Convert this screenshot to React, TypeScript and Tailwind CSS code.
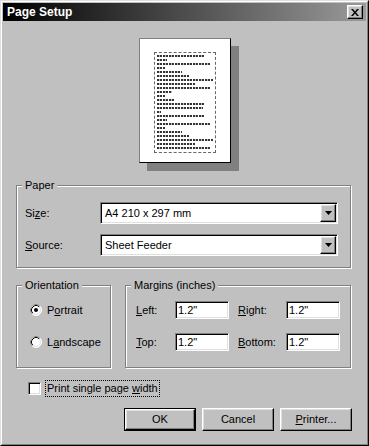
const raised =
  'border border-t-white border-l-white border-r-black border-b-black shadow-[inset_-1px_-1px_0_#808080,inset_1px_1px_0_#dfdfdf] bg-[#c0c0c0]'
const sunken =
  'border border-t-[#808080] border-l-[#808080] border-r-white border-b-white shadow-[inset_1px_1px_0_#000,inset_-1px_-1px_0_#dfdfdf] bg-white'
const etched =
  'border border-[#808080] shadow-[inset_1px_1px_0_#fff,1px_1px_0_#fff]'

const lineWidths = [48, 10, 54, 8, 25, 32, 56, 38, 54, 15, 8, 18, 48, 46, 4, 48, 10, 54, 8, 25, 32, 56, 38, 54]

function Legend({ children }: { children: React.ReactNode }) {
  return (
    <div className="-mt-[7px] ml-[5px] h-[13px] w-fit bg-[#c0c0c0] px-[3px] leading-[13px]">{children}</div>
  )
}

function Select({ value }: { value: string }) {
  return (
    <div className={`${sunken} flex h-[22px] w-[238px] items-center justify-between p-[1px]`}>
      <span className="pl-[3px] leading-none">{value}</span>
      <div className={`${raised} flex h-[18px] w-[16px] items-center justify-center`}>
        <svg width="7" height="4" viewBox="0 0 7 4">
          <path d="M0 0h7L3.5 4z" fill="#000" />
        </svg>
      </div>
    </div>
  )
}

function Radio({ checked }: { checked?: boolean }) {
  return (
    <svg width="12" height="12" viewBox="0 0 12 12" className="shrink-0">
      <circle cx="6" cy="6" r="5.5" fill="#fff" stroke="#fff" />
      <path d="M2.11 9.89A5.5 5.5 0 0 1 9.89 2.11" fill="none" stroke="#808080" />
      <circle cx="6" cy="6" r="4.5" fill="#fff" stroke="#dfdfdf" />
      <path d="M2.82 9.18A4.5 4.5 0 0 1 9.18 2.82" fill="none" stroke="#000" />
      {checked && <circle cx="6" cy="6" r="2" fill="#000" />}
    </svg>
  )
}

function Field({ value }: { value: string }) {
  return (
    <div className={`${sunken} flex h-[18px] w-[54px] items-center pl-[2px] leading-none`}>{value}</div>
  )
}

function Button({ children, primary }: { children: React.ReactNode; primary?: boolean }) {
  if (primary) {
    return (
      <div className="h-[23px] w-[72px] border border-black">
        <div className={`${raised} flex h-full w-full items-center justify-center`}>{children}</div>
      </div>
    )
  }
  return <div className={`${raised} flex h-[23px] w-[72px] items-center justify-center`}>{children}</div>
}

export default function App() {
  return (
    <div className="h-[446px] w-[369px] border border-t-[#dfdfdf] border-l-[#dfdfdf] border-r-black border-b-black bg-[#c0c0c0] font-['Liberation_Sans',Arial,sans-serif] text-[11px] text-black">
      <div className="h-full border border-t-white border-l-white border-r-[#808080] border-b-[#808080] p-[1px]">
        {/* title bar */}
        <div className="flex h-[18px] items-center justify-between bg-[linear-gradient(to_right,#000,#9a9a9a)] pl-[4px] pr-[3px]">
          <span className="text-[12px] font-bold text-white">Page Setup</span>
          <div className={`${raised} flex h-[14px] w-[16px] items-center justify-center`}>
            <svg width="8" height="7" viewBox="0 0 8 7">
              <path d="M0 0h2l2 2.5L6 0h2L5 3.5 8 7H6L4 4.5 2 7H0l3-3.5z" fill="#000" />
            </svg>
          </div>
        </div>

        {/* preview */}
        <div className="mt-[17px] flex justify-center">
          <div className="h-[125px] w-[92px] border border-t-[#808080] border-l-[#808080] border-r-black border-b-black bg-white pl-[14px] pt-[13px] shadow-[8px_8px_0_#808080]">
            <div className="flex h-[101px] w-[62px] flex-col gap-[2px] border border-dashed border-[#666] pl-[2px] pt-[2px]">
              {lineWidths.map((w, i) => (
                <div
                  key={i}
                  className="h-[2px] bg-[repeating-linear-gradient(90deg,#333_0_2px,#bbb_2px_3px,#333_3px_5px,#fff_5px_6px)]"
                  style={{ width: w }}
                />
              ))}
            </div>
          </div>
        </div>

        {/* paper */}
        <div className={`${etched} ml-[13px] mt-[22px] h-[83px] w-[335px]`}>
          <Legend>Paper</Legend>
          <div className="mt-[10px] flex flex-col gap-[10px] pl-[8px]">
            <div className="flex items-center">
              <span className="w-[75px]">
                Si<u className="underline-offset-1">z</u>e:
              </span>
              <Select value="A4 210 x 297 mm" />
            </div>
            <div className="flex items-center">
              <span className="w-[75px]">
                <u className="underline-offset-1">S</u>ource:
              </span>
              <Select value="Sheet Feeder" />
            </div>
          </div>
        </div>

        {/* orientation + margins */}
        <div className="ml-[13px] mt-[17px] flex gap-[14px]">
          <div className={`${etched} h-[83px] w-[95px]`}>
            <Legend>Orientation</Legend>
            <div className="mt-[12px] flex flex-col gap-[20px] pl-[13px]">
              <div className="flex h-[12px] items-center gap-[5px]">
                <Radio checked />
                <span>
                  P<u className="underline-offset-1">o</u>rtrait
                </span>
              </div>
              <div className="flex h-[12px] items-center gap-[5px]">
                <Radio />
                <span>
                  L<u className="underline-offset-1">a</u>ndscape
                </span>
              </div>
            </div>
          </div>

          <div className={`${etched} h-[83px] w-[226px]`}>
            <Legend>Margins (inches)</Legend>
            <div className="mt-[9px] flex flex-col gap-[14px] pl-[10px]">
              <div className="flex items-center">
                <span className="w-[39px]">
                  <u className="underline-offset-1">L</u>eft:
                </span>
                <Field value={'1.2"'} />
                <span className="ml-[9px] w-[48px]">
                  <u className="underline-offset-1">R</u>ight:
                </span>
                <Field value={'1.2"'} />
              </div>
              <div className="flex items-center">
                <span className="w-[39px]">
                  <u className="underline-offset-1">T</u>op:
                </span>
                <Field value={'1.2"'} />
                <span className="ml-[9px] w-[48px]">
                  <u className="underline-offset-1">B</u>ottom:
                </span>
                <Field value={'1.2"'} />
              </div>
            </div>
          </div>
        </div>

        {/* checkbox */}
        <div className="ml-[25px] mt-[12px] flex items-center gap-[4px]">
          <div className={`${sunken} h-[13px] w-[13px]`} />
          <span className="flex h-[17px] items-center border border-dotted border-black px-[1px]">
            Print single page&nbsp;<u className="underline-offset-1">w</u>idth
          </span>
        </div>

        {/* buttons */}
        <div className="ml-[121px] mt-[11px] flex gap-[6px]">
          <Button primary>OK</Button>
          <Button>Cancel</Button>
          <Button>
            <span>
              <u className="underline-offset-1">P</u>rinter...
            </span>
          </Button>
        </div>
      </div>
    </div>
  )
}
